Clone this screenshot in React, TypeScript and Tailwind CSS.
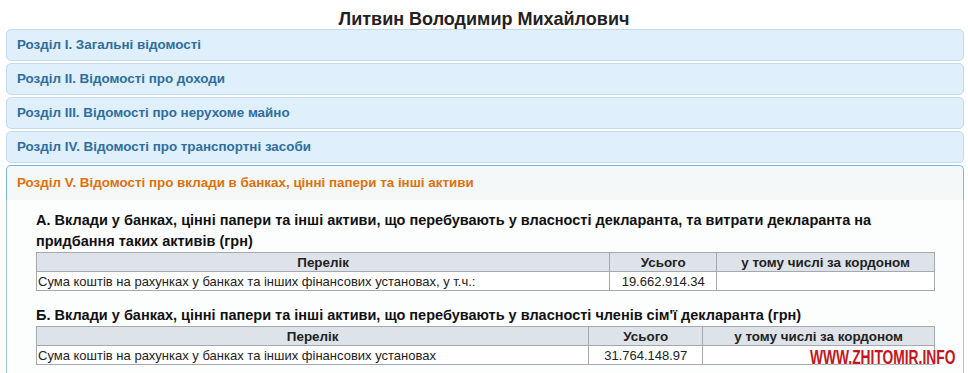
const sections = [
  "Розділ I. Загальні відомості",
  "Розділ II. Відомості про доходи",
  "Розділ III. Відомості про нерухоме майно",
  "Розділ IV. Відомості про транспортні засоби",
]

type TableProps = {
  widths: [string, string, string]
  label: string
  total: string
}

const AssetTable = ({ widths, label, total }: TableProps) => (
  <table className="w-[899px] border-collapse text-[13px] leading-[17px] text-[#222]">
    <thead>
      <tr className="bg-[#dde3e8] text-[13.4px]">
        <th className={`${widths[0]} border border-[#a5a9ad] font-bold text-center h-[19px] p-0`}>Перелік</th>
        <th className={`${widths[1]} border border-[#a5a9ad] font-bold text-center p-0`}>Усього</th>
        <th className={`${widths[2]} border border-[#a5a9ad] font-bold text-center p-0`}>у тому числі за кордоном</th>
      </tr>
    </thead>
    <tbody>
      <tr className="bg-white">
        <td className="border border-[#a5a9ad] h-[19px] px-px py-0 text-left">{label}</td>
        <td className="border border-[#a5a9ad] text-center p-0">{total}</td>
        <td className="border border-[#a5a9ad] p-0"></td>
      </tr>
    </tbody>
  </table>
)

export default function App() {
  return (
    <div className="relative w-[968px] h-[373px] overflow-hidden bg-white font-['Liberation_Sans',Arial,sans-serif]">
      <h1 className="text-center text-[18px] leading-[22px] font-bold text-[#222] pt-[8px]">
        Литвин Володимир Михайлович
      </h1>
      <div className="ml-[6px] w-[958px] flex flex-col gap-[2px] mt-[-1px]">
        {sections.map((s) => (
          <div
            key={s}
            className="h-[32px] flex items-center pl-[10px] rounded-[5px] border border-[#c5dbec] bg-[#dfeffc] text-[#2e6e9e] text-[13.4px] font-bold"
          >
            {s}
          </div>
        ))}
        <div>
          <div className="h-[35px] flex items-center pl-[10px] rounded-t-[5px] border border-b-0 border-[#79b7e7] bg-[#f5f8f9] text-[#e17009] text-[13.4px] font-bold">
            Розділ V. Відомості про вклади в банках, цінні папери та інші активи
          </div>
          <div className="border border-t-0 border-[#a6c9e2] bg-[#fcfdfd] pl-[29px] pt-[10px] h-[200px]">
            <h3 className="text-[14.5px] leading-[21px] font-bold text-[#111] w-[900px]">
              А. Вклади у банках, цінні папери та інші активи, що перебувають у власності декларанта, та витрати декларанта на
              придбання таких активів (грн)
            </h3>
            <AssetTable
              widths={["w-[574px]", "w-[107px]", "w-[218px]"]}
              label="Сума коштів на рахунках у банках та інших фінансових установах, у т.ч.:"
              total="19.662.914.34"
            />
            <h3 className="text-[14.5px] leading-[21px] font-bold text-[#111] mt-[14px]">
              Б. Вклади у банках, цінні папери та інші активи, що перебувають у власності членів сім'ї декларанта (грн)
            </h3>
            <AssetTable
              widths={["w-[553px]", "w-[114px]", "w-[232px]"]}
              label="Сума коштів на рахунках у банках та інших фінансових установах"
              total="31.764.148.97"
            />
          </div>
        </div>
      </div>
      <div className="absolute left-[810px] top-[345px] whitespace-nowrap origin-left scale-x-[0.69] text-[20px] leading-[24px] font-bold text-[#c4161c] [text-shadow:0_0_2px_#fff,0_0_2px_#fff]">
        WWW.ZHITOMIR.INFO
      </div>
    </div>
  )
}
